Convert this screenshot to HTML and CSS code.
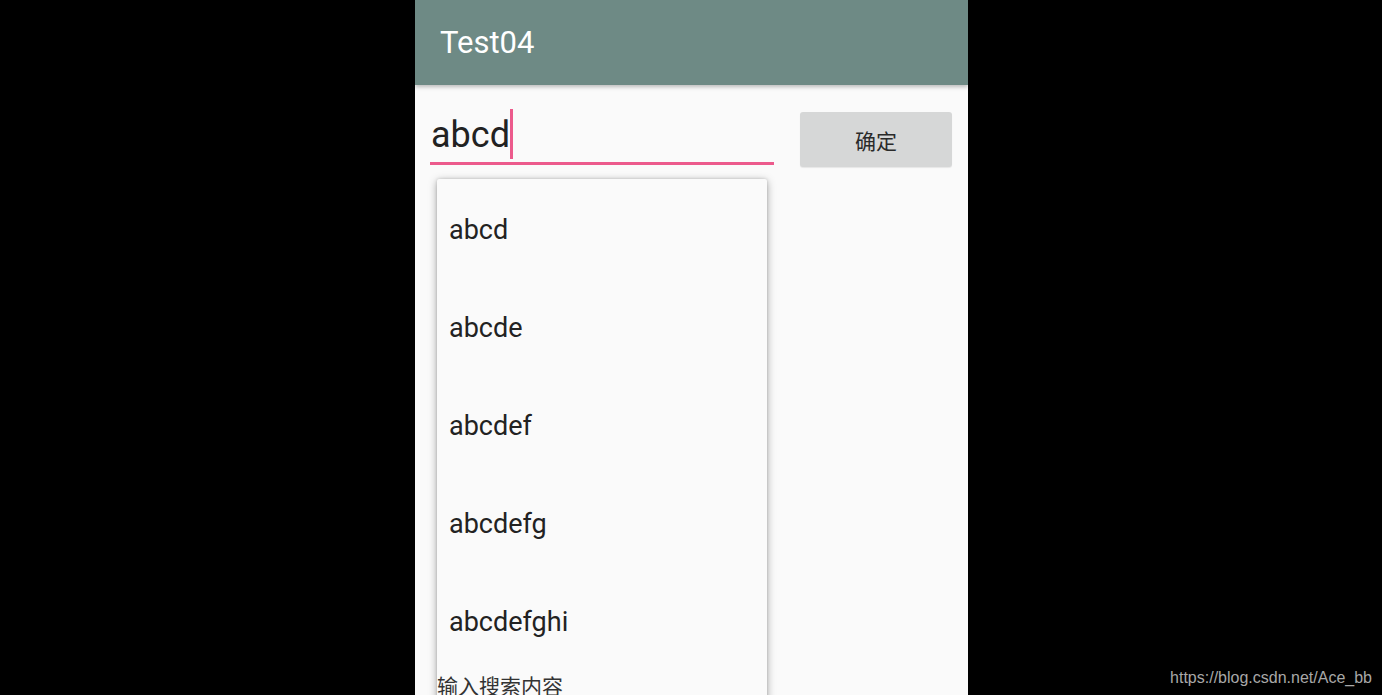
FILE: index.html
```html
<!DOCTYPE html>
<html>
<head>
<meta charset="utf-8">
<link rel="stylesheet" href="styles.css">
</head>
<body>
<div class="stage">
  <div class="phone">
    <div class="toolbar"><span class="title">Test04</span></div>
    <div class="content">
      <div class="row">
        <div class="edit">
          <span class="edit-text">abcd</span><span class="cursor"></span>
        </div>
        <button class="btn">确定</button>
      </div>
      <div class="dropdown">
        <div class="item">abcd</div>
        <div class="item">abcde</div>
        <div class="item">abcdef</div>
        <div class="item">abcdefg</div>
        <div class="item">abcdefghi</div>
        <div class="hint">输入搜索内容</div>
      </div>
    </div>
  </div>
  <div class="watermark">https://blog.csdn.net/Ace_bb</div>
</div>
</body>
</html>
```

FILE: styles.css
```css
html, body {
  margin: 0;
  padding: 0;
  background: #000;
  height: 100%;
  overflow: hidden;
}
.stage {
  position: relative;
  width: 1382px;
  height: 695px;
  display: flex;
  justify-content: center;
  overflow: hidden;
}
.phone {
  width: 553px;
  height: 695px;
  margin-left: 1px;
  background: #fafafa;
  display: flex;
  flex-direction: column;
  font-family: Roboto, "Noto Sans CJK SC", sans-serif;
  overflow: hidden;
}
.toolbar {
  height: 85px;
  flex: 0 0 85px;
  background: #6e8a85;
  display: flex;
  align-items: center;
  padding-left: 25px;
  box-shadow: 0 2px 4px rgba(0,0,0,0.25);
  position: relative;
  z-index: 2;
}
.title {
  color: #fff;
  font-size: 31px;
  font-weight: 400;
  margin-top: 0;
}
.content {
  position: relative;
  flex: 1;
}
.row {
  display: flex;
  align-items: flex-start;
  padding: 24px 16px 0 15px;
}
.edit {
  width: 343px;
  height: 53px;
  border-bottom: 3px solid #ec5a8c;
  display: flex;
  align-items: flex-end;
  padding-left: 1px;
}
.edit-text {
  font-size: 36px;
  color: #222;
  line-height: 36px;
  margin-bottom: 9px;
}
.cursor {
  width: 3px;
  height: 50px;
  background: #ec5a8c;
  margin-left: 0;
  margin-bottom: 3px;
}
.btn {
  margin-left: auto;
  margin-top: 3px;
  width: 152px;
  height: 55px;
  border: none;
  border-radius: 3px;
  background: #d6d7d7;
  color: #2a2a2a;
  font-family: "Noto Sans CJK SC", sans-serif;
  font-size: 21px;
  box-shadow: 0 1px 1px rgba(0,0,0,0.08);
  padding: 0;
}
.dropdown {
  position: absolute;
  left: 22px;
  top: 94px;
  width: 330px;
  height: 640px;
  background: #fafafa;
  border-radius: 2px;
  box-shadow: 0 2px 8px rgba(0,0,0,0.35), 0 0 3px rgba(0,0,0,0.15);
  display: flex;
  flex-direction: column;
  padding-top: 2px;
}
.item {
  height: 98px;
  flex: 0 0 98px;
  display: flex;
  align-items: center;
  padding-left: 12px;
  font-size: 27px;
  color: #222;
}
.hint {
  font-family: "Noto Sans CJK SC", sans-serif;
  font-size: 21px;
  color: #333;
  line-height: 28px;
  margin-top: 0;
}
.watermark {
  position: absolute;
  right: 10px;
  bottom: 8px;
  font-family: "Liberation Sans", Arial, sans-serif;
  font-size: 16px;
  color: #a8a8a8;
}
```
